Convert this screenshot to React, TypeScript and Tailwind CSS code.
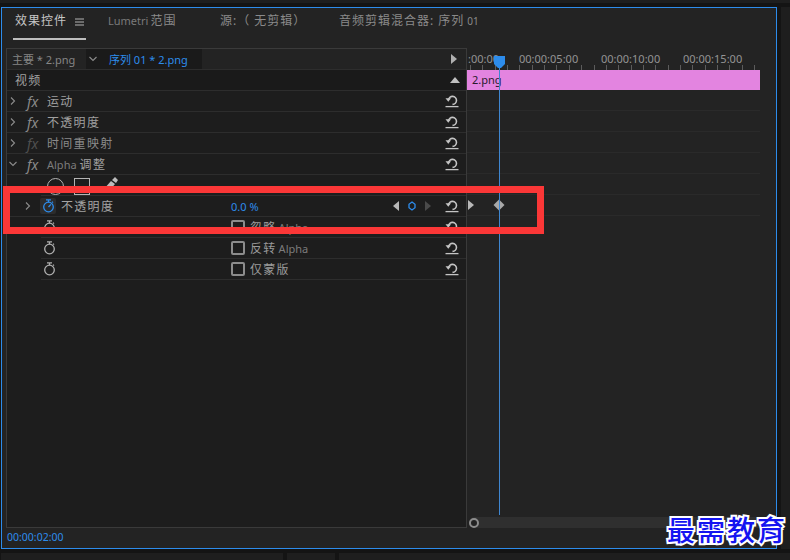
const font = "font-['Noto_Sans','Noto_Sans_CJK_SC',sans-serif]";

// reset arrow shown at the end of every effect row
function ResetIcon() {
  return (
    <svg width="14" height="14" viewBox="0 0 14 14" fill="none" stroke="#c4c4c4">
      <path d="M3.500 6a4 4 0 1 1 4 4.400" strokeWidth="1.600" />
      <path d="M0.500 4.200h5.500L3.300 7.800z" fill="#c4c4c4" stroke="none" />
      <path d="M0.500 12.600h13" strokeWidth="1.300" />
    </svg>
  );
}

function Stopwatch({ active }: { active?: boolean }) {
  const c = active ? "#2d8ceb" : "#b0b0b0";
  return (
    <svg width="13" height="14" viewBox="0 0 13 14" fill="none" stroke={c} strokeWidth="1.300">
      <circle cx="6.500" cy="8" r="4.800" />
      <path d="M4 0.800h5M6.500 0.800v2.400" />
      <path d="M10 2.600l1 1" />
      {active && <path d="M6.500 8l2.400-2.600" />}
    </svg>
  );
}

function Chevron({ open }: { open?: boolean }) {
  return (
    <svg width="8" height="8" viewBox="0 0 8 8" fill="none" stroke="#8c8c8c" strokeWidth="1.100">
      {open ? <path d="M0.500 2l3.500 3.500L7.500 2" /> : <path d="M2 0.500L5.500 4 2 7.500" />}
    </svg>
  );
}

function Alpha({ className }: { className: string }) {
  return <span className={`text-[11px] tracking-normal text-[#7c7c7c] ${className}`}>Alpha</span>;
}

function FxRow({ label, dim, open, alpha }: { label: string; dim?: boolean; open?: boolean; alpha?: boolean }) {
  return (
    <div className="h-[21px] border-b border-[#2d2d2d] flex items-center pl-[2px] pr-[7px]">
      <span className="w-[18px] flex"><Chevron open={open} /></span>
      <span className={`w-[20px] font-['Noto_Sans',sans-serif] italic text-[14px] pt-[1px] ${dim ? "text-[#4f4f4f]" : "text-[#8a8a8a]"}`}>fx</span>
      <span className={`flex-1 pt-[2px] text-[12px] tracking-[1.300px] ${dim ? "text-[#8a8a8a]" : "text-[#a0a0a0]"}`}>
        {alpha && <Alpha className="mr-[3px]" />}
        {label}
      </span>
      <ResetIcon />
    </div>
  );
}

function CheckRow({ label, alpha }: { label: string; alpha?: boolean }) {
  return (
    <div className="h-[21px] ml-[34px] border-b border-[#2d2d2d] flex items-center pl-[1px] pr-[7px]">
      <span className="w-[189px] pl-[1px] flex"><Stopwatch /></span>
      <span className="w-[14px] h-[14px] border-2 border-[#8c8c8c] rounded-[2px] mr-[5px]" />
      <span className="flex-1 pt-[2px] text-[12px] tracking-[1.300px] text-[#9a9a9a]">
        {label}
        {alpha && <Alpha className="ml-[2px]" />}
      </span>
      <ResetIcon />
    </div>
  );
}

function Triangle({ dir, color }: { dir: "l" | "r" | "u"; color: string }) {
  const d = dir === "l" ? "M7 0v10L1 5z" : dir === "r" ? "M1 0v10l6-5z" : "M0 8h10L5 2z";
  return (
    <svg width={dir === "u" ? 10 : 8} height="10" viewBox={dir === "u" ? "0 0 10 10" : "0 0 8 10"} fill={color}>
      <path d={d} />
    </svg>
  );
}

function Ruler() {
  const ticks = Array.from({ length: 24 }, (_, i) => i * 12.35 + 3);
  return (
    <svg width="293" height="6" className="block">
      {ticks.map((x) => (
        <rect key={x} x={Math.round(x)} y={1} width="1" height="5" fill="#5c5c5c" />
      ))}
    </svg>
  );
}

export default function App() {
  return (
    <div className={`${font} relative w-[790px] h-[560px] overflow-hidden bg-[#141414] flex flex-col`}>
      <div className="h-[3px] bg-[#1e1e1e]" />
      <div className="h-[4px]" />
      <div className="flex h-[542px]">
        {/* Main panel */}
        <div className="ml-[1px] w-[776px] border border-[#2d8ceb] bg-[#232323] flex flex-col">
          {/* Tabs */}
          <div className="h-[40px] flex items-start pt-[3px] text-[12px] tracking-[1px] text-[#8a8a8a]">
            <div className="ml-[11px] w-[73px] h-[29px] border-b-2 border-[#bdbdbd] flex items-start gap-[8px] pl-[2px] text-[#c6c6c6]">
              <span className="leading-[20px]">效果控件</span>
              <svg width="9" height="8" viewBox="0 0 9 8" className="mt-[7px]" stroke="#b4b4b4">
                <path d="M0 1h9M0 4h9M0 7h9" />
              </svg>
            </div>
            <div className="ml-[22px] leading-[20px] w-[112px]">
              <span className="text-[11px] tracking-normal text-[#7a7a7a] mr-[2px]">Lumetri</span>范围
            </div>
            <div className="leading-[20px] w-[119px]">源:（ 无剪辑）</div>
            <div className="leading-[20px]">
              音频剪辑混合器: 序列<span className="text-[10px] tracking-normal ml-[3px]">01</span>
            </div>
          </div>

          {/* Controls + timeline */}
          <div className="flex h-[480px]">
            <div className="ml-[4px] w-[461px] border border-[#3a3a3a] bg-[#1d1d1d] flex flex-col">
              <div className="h-[21px] border-b border-[#2d2d2d] bg-[#232323] flex items-center pr-[8px] text-[11px] leading-none">
                <span className="pl-[5px] w-[79px] text-[#858585] whitespace-nowrap">主要 * 2.png</span>
                <div className="w-[116px] h-full bg-[#1a1a1a] flex items-center pl-[3px] text-[#2d8ceb]">
                  <span className="w-[20px]"><Chevron open /></span>
                  <span className="whitespace-nowrap">序列 01 * 2.png</span>
                </div>
                <span className="ml-auto"><Triangle dir="r" color="#b0b0b0" /></span>
              </div>
              <div className="h-[21px] border-b border-[#2d2d2d] bg-[#1a1a1a] flex items-center pl-[8px] pr-[6px] text-[12px] tracking-[1.300px] text-[#a0a0a0]">
                <span className="flex-1 pt-[1px]">视频</span>
                <Triangle dir="u" color="#c0c0c0" />
              </div>
              <FxRow label="运动" />
              <FxRow label="不透明度" />
              <FxRow label="时间重映射" dim />
              <FxRow label="调整" open alpha />
              {/* Mask tools */}
              <div className="h-[21px] border-b border-[#2d2d2d] ml-[34px] pl-[6px] flex items-start gap-[10px] overflow-hidden">
                <span className="mt-[3px] w-[17px] h-[17px] rounded-full border border-[#b4b4b4]" />
                <span className="mt-[3px] w-[16px] h-[17px] border border-[#b4b4b4]" />
                <svg width="16" height="14" viewBox="0 0 16 14" className="mt-[2px] ml-[3px]" fill="#bcbcbc">
                  <path d="M1 12L8 4l4 3-6 7zM9 3l3-3 3 3-2 3z" />
                </svg>
              </div>
              {/* Opacity property */}
              <div className="h-[21px] border-b border-[#2d2d2d] flex items-center pl-[17px] pr-[7px]">
                <span className="w-[16px] flex"><Chevron /></span>
                <span className="w-[16px] h-[16px] rounded-[2px] bg-[#2c2c2c] flex items-center justify-center mr-[5px]"><Stopwatch active /></span>
                <span className="w-[170px] pt-[2px] text-[12px] tracking-[1.300px] text-[#a4a4a4]">不透明度</span>
                <span className="w-[161px] pt-[2px] text-[11px] text-[#2d8ceb]">0.0 %</span>
                <span className="flex items-center w-[53px] gap-[8px]">
                  <Triangle dir="l" color="#b8b8b8" />
                  <svg width="8" height="10" viewBox="0 0 8 10" fill="none" stroke="#2d8ceb" strokeWidth="1.300"><path d="M4 1l3 2.300v3.400L4 9 1 6.700V3.300z" /></svg>
                  <Triangle dir="r" color="#4a4a4a" />
                </span>
                <ResetIcon />
              </div>
              <CheckRow label="忽略" alpha />
              <CheckRow label="反转" alpha />
              <CheckRow label="仅蒙版" />
            </div>

            {/* Timeline */}
            <div className="relative w-[293px] flex flex-col">
              <div className="h-[16px] pl-[1px] flex items-end text-[11px] leading-none text-[#949494] gap-[20px] whitespace-nowrap">
                <span className="w-[31px]">:00:00</span>
                <span className="w-[62px]">00:00:05:00</span>
                <span className="w-[62px]">00:00:10:00</span>
                <span className="w-[62px]">00:00:15:00</span>
              </div>
              <Ruler />
              <div className="h-[20px] bg-[#e384e0] pl-[5px] flex items-center text-[11px] text-[#2a1a2a]">2.png</div>
              <div className="h-[21px] border-b border-[#2a2a2a]" />
              <div className="h-[21px] border-b border-[#2a2a2a]" />
              <div className="h-[21px] border-b border-[#2a2a2a]" />
              <div className="h-[21px] border-b border-[#2a2a2a]" />
              <div className="h-[21px] border-b border-[#2a2a2a]" />
              <div className="h-[21px] border-b border-[#2a2a2a] flex items-center">
                <Triangle dir="r" color="#b8b8b8" />
                <svg width="12" height="12" viewBox="0 0 12 12" fill="#a8a8a8" className="ml-[18px]"><path d="M6 0.500L11.500 6 6 11.500 0.500 6z" /></svg>
              </div>
              <div className="flex-1" />
              {/* Scrollbar */}
              <div className="h-[11px] mr-[-7px] ml-[2px] bg-[#2f2f2f] rounded-l-full flex items-center">
                <span className="w-[10px] h-[10px] rounded-full border-2 border-[#8c8c8c] bg-[#232323]" />
              </div>

              {/* Playhead */}
              <div className="absolute left-[32px] top-[9px] bottom-[13px] w-px bg-[#3f86d0]" />
              <svg width="11" height="12" viewBox="0 0 11 12" fill="#2d8ceb" className="absolute left-[27px] top-[8px]">
                <path d="M0 0h11v8l-4 4H4L0 8z" />
              </svg>
            </div>
          </div>

          {/* Current time */}
          <div className="flex-1 pl-[5px] flex items-center text-[10.500px] text-[#2d8ceb]">00:00:02:00</div>
        </div>
        <div className="ml-[4px] flex-1 bg-[#1e1e1e]" />
      </div>
      <div className="h-[4px]" />
      <div className="flex-1 flex gap-[4px] pl-[1px]">
        <div className="w-[282px] bg-[#1e1e1e]" />
        <div className="w-[48px] bg-[#1e1e1e]" />
        <div className="flex-1 bg-[#1e1e1e]" />
      </div>

      {/* Red annotation box */}
      <div className="absolute left-[3px] top-[186px] w-[541px] h-[48px] border-[7px] border-[#fb3737]" />

      {/* Watermark */}
      <div className="absolute left-[667px] top-[509px] text-[28px] leading-[40px] font-medium tracking-[2px] whitespace-nowrap text-[#1414f0] [-webkit-text-stroke:4px_white] [paint-order:stroke_fill] font-['Noto_Sans_CJK_TC','Noto_Sans_CJK_SC',serif]">
        最需教育
      </div>
    </div>
  );
}
